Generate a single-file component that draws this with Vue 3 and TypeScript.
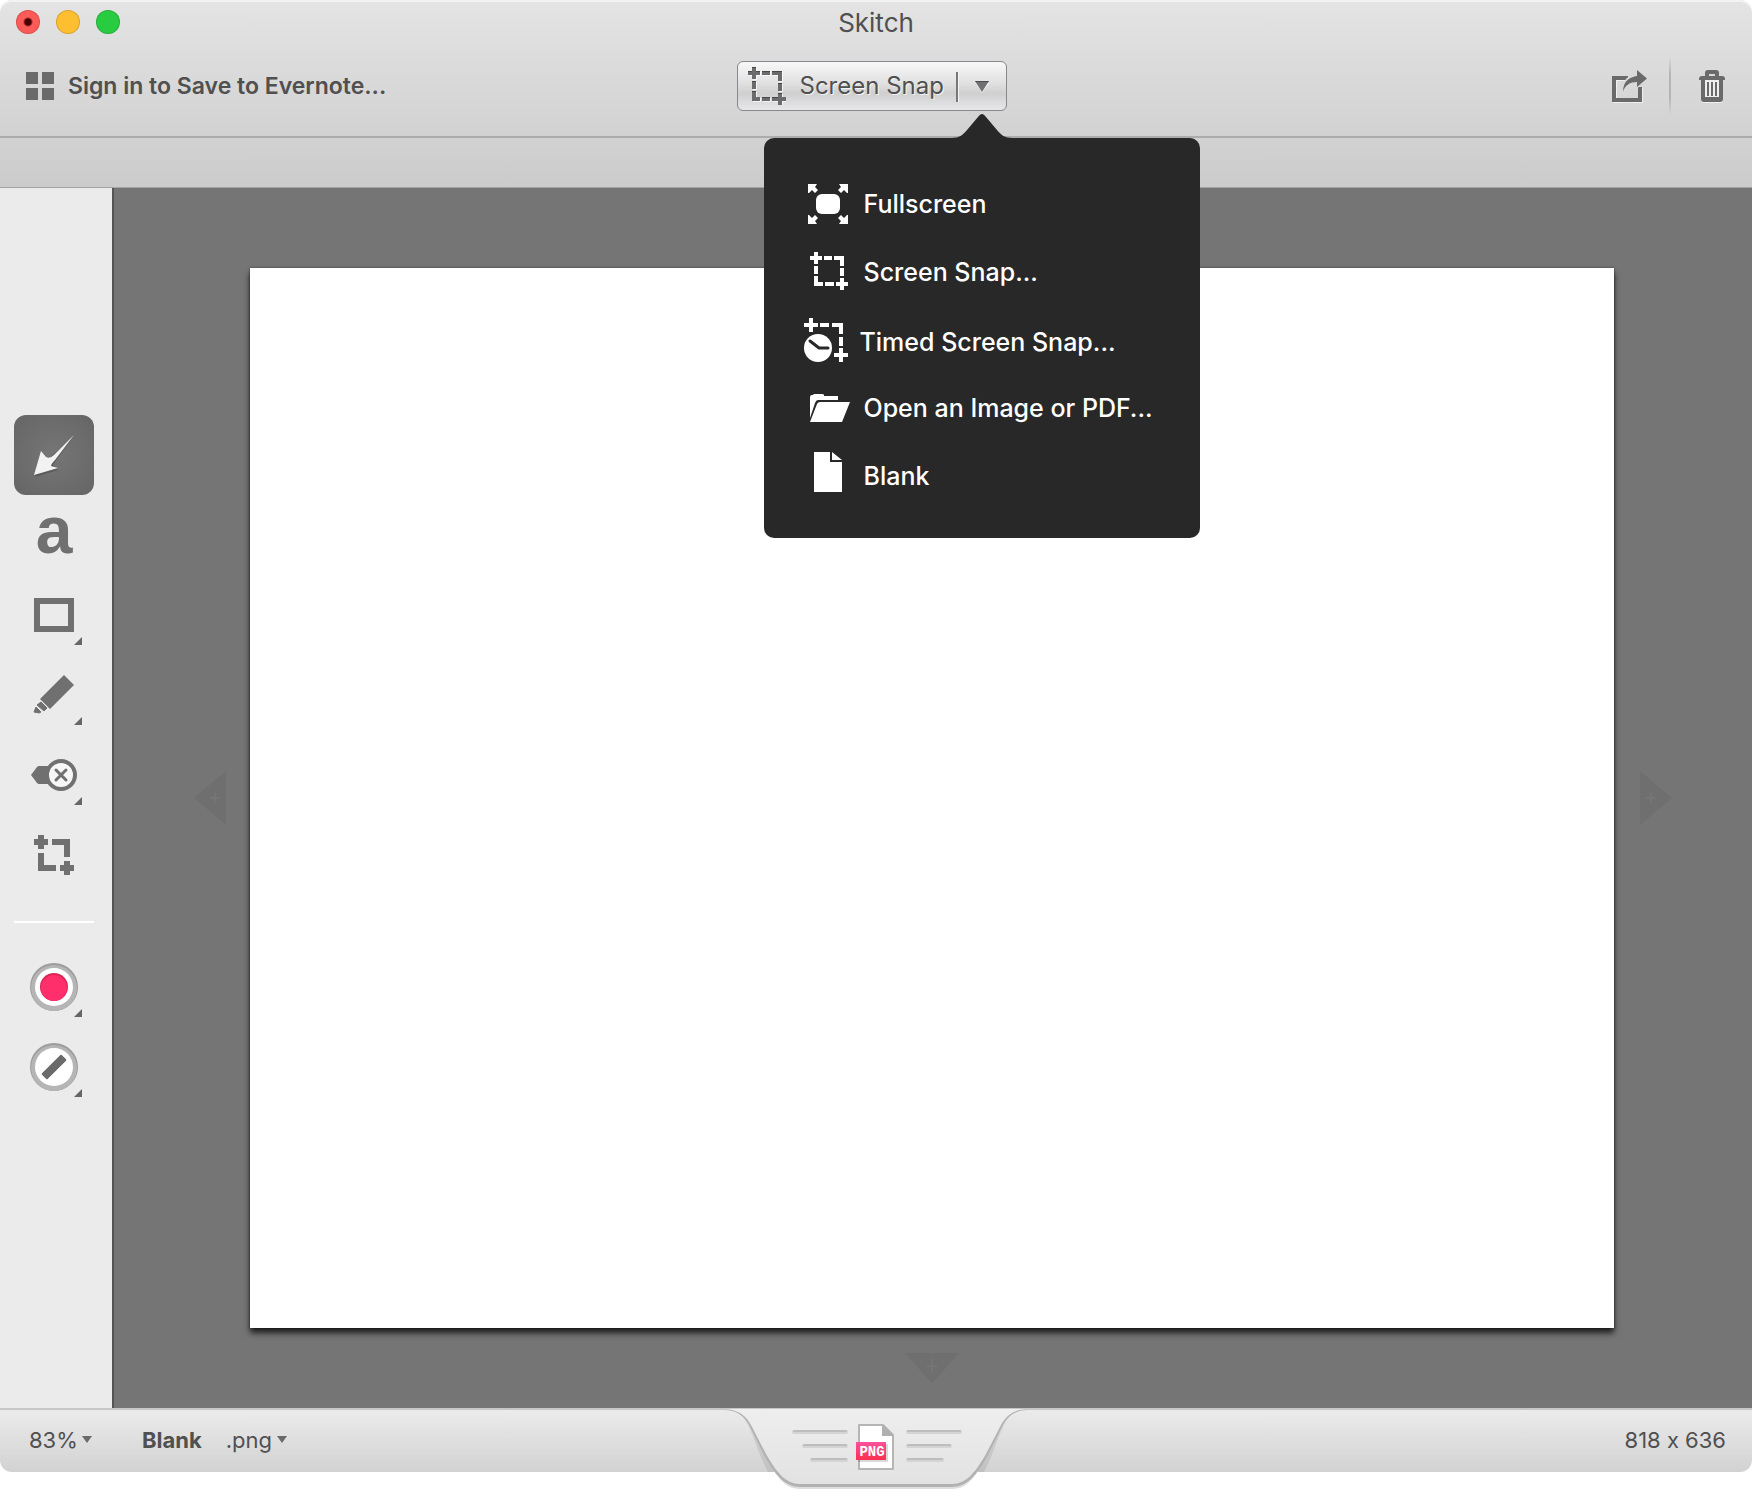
<script setup lang="ts">
import { ref } from 'vue'

type Tool = 'arrow' | 'text' | 'shape' | 'marker' | 'pixelate' | 'crop'

interface ToolEntry {
  id: Tool
  label: string
  more: boolean
}

const tools: ToolEntry[] = [
  { id: 'arrow', label: 'Arrow', more: false },
  { id: 'text', label: 'Text', more: false },
  { id: 'shape', label: 'Rectangle', more: true },
  { id: 'marker', label: 'Marker', more: true },
  { id: 'pixelate', label: 'Pixelate', more: true },
  { id: 'crop', label: 'Crop', more: false },
]

const activeTool = ref<Tool>('arrow')
const menuOpen = ref(true)
</script>

<template>
  <div class="window">
    <header class="chrome">
      <div class="titlebar">
        <div class="lights">
          <button class="light close" aria-label="Close"></button>
          <button class="light minimise" aria-label="Minimise"></button>
          <button class="light zoom" aria-label="Zoom"></button>
        </div>
        <h1 class="title">Skitch</h1>
      </div>
      <div class="toolbar">
        <button class="account">
          <svg width="28" height="28" viewBox="0 0 28 28" fill="#6a6a6a" aria-hidden="true">
            <path d="M0 0h12v12H0zM16 0h12v12H16zM0 16h12v12H0zM16 16h12v12H16z" />
          </svg>
          <span>Sign in to Save to Evernote...</span>
        </button>

        <div class="capture">
          <button class="snap">
            <svg width="38" height="38" viewBox="0 0 38 38" aria-hidden="true">
              <g fill="#fff" transform="translate(1 1)" opacity=".7">
                <path d="M4 0h4v4h4v4H8v4H4V8H0V4h4zM14 4h8v4h-8zM24 4h10v10h-4V8h-6zM30 16h4v8h-4zM4 14h4v8H4zM4 24h4v6h4v4H4zM14 30h8v4h-8zM30 26h4v4h4v4h-4v4h-4v-4h-6v-4h6z" />
              </g>
              <path fill="#6b6b6e" d="M4 0h4v4h4v4H8v4H4V8H0V4h4zM14 4h8v4h-8zM24 4h10v10h-4V8h-6zM30 16h4v8h-4zM4 14h4v8H4zM4 24h4v6h4v4H4zM14 30h8v4h-8zM30 26h4v4h4v4h-4v4h-4v-4h-6v-4h6z" />
              <path fill="#47474a" d="M4 0h4v1H4zM0 4h4v1H0zM8 4h4v1H8zM14 4h8v1h-8zM24 4h10v1H24zM14 30h8v1h-8zM30 26h4v1h-4zM24 30h6v1h-6zM30 16h4v1h-4zM4 14h4v1H4zM4 24h4v1H4z" />
            </svg>
            <span>Screen Snap</span>
          </button>
          <button class="more" aria-label="Capture options" :aria-expanded="menuOpen" @click="menuOpen = !menuOpen">
            <svg width="14" height="12" viewBox="0 0 14 12" aria-hidden="true">
              <path fill="#f5f5f5" d="M1 2h13L7 12z" />
              <path fill="#6f6f74" d="M0 0h14L7 11z" />
              <path fill="#4a4a4d" d="M0 0h14l-1 1H1z" />
            </svg>
          </button>

          <nav v-if="menuOpen" class="menu" aria-label="Capture">
            <svg class="pointer" width="60" height="25" viewBox="0 0 60 25" aria-hidden="true">
              <path fill="#282828" d="M0 25V24C7 24 11 21 15 16L26 3C29-1 31-1 34 3L45 16C49 21 53 24 60 24V25Z" />
            </svg>
            <button class="item">
              <svg width="44" height="44" viewBox="0 0 44 44" fill="#fff" aria-hidden="true">
                <rect x="12" y="12" width="24" height="20" rx="6" />
                <path d="M4 2h9l-2 3 3 3-3 3-3-3-3 3H4zM44 2h-9l2 3-3 3 3 3 3-3 3 3h1zM4 42h9l-2-3 3-3-3-3-3 3-3-3H4zM44 42h-9l2-3-3-3 3-3 3 3 3-3h1z" />
              </svg>
              <span>Fullscreen</span>
            </button>
            <button class="item">
              <svg width="44" height="44" viewBox="0 0 44 44" fill="#fff" aria-hidden="true">
                <path d="M10 2h4v4h4v4h-4v4h-4v-4H6V6h4zM20 6h8v4h-8zM30 6h10v10h-4v-6h-6zM36 18h4v8h-4zM10 16h4v8h-4zM10 26h4v6h5v4h-9zM21 32h9v4h-9zM36 28h4v4h4v4h-4v4h-4v-4h-4v-4h4z" />
              </svg>
              <span>Screen Snap...</span>
            </button>
            <button class="item timed">
              <svg width="44" height="44" viewBox="0 0 44 44" fill="#fff" aria-hidden="true">
                <path d="M5 0h4v5h5v4H9v5H5V9H0V5h5zM16 5h9v4h-9zM28 5h11v11h-4V9h-7zM35 19h4v9h-4zM35 30h4v5h5v4h-5v5h-4v-5h-5v-4h5z" />
                <circle cx="14" cy="30" r="14" />
                <path d="M6 23l9 7h9" fill="none" stroke="#282828" stroke-width="3" stroke-linecap="round" />
              </svg>
              <span>Timed Screen Snap...</span>
            </button>
            <button class="item">
              <svg class="folder" width="44" height="44" viewBox="0 0 44 44" fill="#fff" aria-hidden="true">
                <path d="M6 32V11q0-2 2-2h1q0-1 2-1h7q2 0 2 1v1h14v4H14q-2 0-3 3z" />
                <path d="M13 18q1-2 3-2h30l-8 20H6z" />
              </svg>
              <span>Open an Image or PDF...</span>
            </button>
            <button class="item">
              <svg width="44" height="48" viewBox="0 0 44 48" fill="#fff" aria-hidden="true">
                <path d="M10 0h16v10h12v30H10zM28 0l10 8H28z" />
              </svg>
              <span>Blank</span>
            </button>
          </nav>
        </div>

        <div class="actions">
          <button aria-label="Share">
            <svg width="36" height="34" viewBox="0 0 36 34" aria-hidden="true">
              <path fill="none" stroke="#efefef" stroke-width="4" d="M14 10H4v22h26V19" />
              <path fill="none" stroke="#6a6a6a" stroke-width="4" d="M17 9H3v22h26V18" />
              <path fill="#dadada" d="M11 25C11 9 19 6 24 5V1l12 8-12 13v-6c-6 0-9 3-11 9z" />
              <path fill="#6a6a6a" d="M12 23C12 12 19 8 26 7V1l10 8.500-10 8.500v-5c-7 0-12 3-14 10z" />
            </svg>
          </button>
          <i class="rule"></i>
          <button aria-label="Delete">
            <svg width="26" height="34" viewBox="0 0 26 34" aria-hidden="true">
              <path fill="#efefef" d="M2 10h22v21q0 3-3 3H5q-3 0-3-3z" />
              <path fill="#6a6a6a" fill-rule="evenodd" d="M2 10h22v20q0 3-3 3H5q-3 0-3-3zM6 11v17h14V11z" />
              <path fill="#6a6a6a" fill-rule="evenodd" d="M0 10q0-3 3-3h3V4q0-3 3-3h8q3 0 3 3v3h3q3 0 3 3v1H0zM10 7h6V5h-6z" />
              <path stroke="#6a6a6a" stroke-width="2" d="M9 13v14M13 13v14M17 13v14" />
            </svg>
          </button>
        </div>
      </div>
      <div class="strip"></div>
    </header>

    <main class="body">
      <aside class="tools">
        <button
          v-for="tool in tools"
          :key="tool.id"
          class="tool"
          :class="{ active: tool.id === activeTool, letter: tool.id === 'text' }"
          :aria-label="tool.label"
          @click="activeTool = tool.id"
        >
          <span v-if="tool.id === 'text'">a</span>
          <svg v-else width="80" height="80" viewBox="0 0 80 80" fill="#707070" aria-hidden="true">
            <g v-if="tool.id === 'arrow'">
              <path fill="#4c4c4c" opacity=".6" d="M21 62l7-23 5 6 26-23-20 28 5 5z" />
              <path fill="#f2f2f2" d="M20 60l7-24 5 6q4 2 8-2l20-20-19 25q-4 4-4 6l7 2z" />
            </g>
            <path v-if="tool.id === 'shape'" fill-rule="evenodd" d="M20 23h40v34H20zM26 29v22h28V29z" />
            <g v-if="tool.id === 'marker'">
              <path d="M50 20l10 10-24 24-10-10z" />
              <path d="M27 47l6 6-3 3-7-6zM22 52l5 5-2 1-5-1z" stroke="#707070" stroke-width="1" />
            </g>
            <g v-if="tool.id === 'pixelate'">
              <path d="M17 40l6-8q1-1 2-1h15v18H25q-1 0-2-1z" />
              <circle cx="47" cy="40" r="14" fill="#f6f6f6" stroke="#707070" stroke-width="4" />
              <path d="M42 35l10 10M52 35L42 45" stroke="#707070" stroke-width="3" stroke-linecap="round" />
            </g>
            <path v-if="tool.id === 'crop'" d="M24 20h6v4h4v6h-4v4h-6v-4h-4v-6h4zM38 24h18v18h-6V30H38zM24 38h6v12h12v6H24zM50 46h6v4h4v6h-4v4h-6v-4h-4v-6h4z" />
            <path v-if="tool.more" fill="#666" d="M60 70l8-8v8z" />
          </svg>
        </button>
        <hr class="divider" />
        <button class="tool" aria-label="Colour">
          <svg width="80" height="80" viewBox="0 0 80 80" aria-hidden="true">
            <circle cx="40" cy="40" r="24" fill="#9c9c9c" />
            <circle cx="40" cy="41" r="23" fill="#b5b5b5" />
            <circle cx="40" cy="40" r="19" fill="#fff" />
            <circle cx="40" cy="40" r="14" fill="#d92558" />
            <circle cx="40" cy="41" r="13" fill="#ff2f6c" />
            <path fill="#666" d="M60 70l8-8v8z" />
          </svg>
        </button>
        <button class="tool" aria-label="Line width">
          <svg width="80" height="80" viewBox="0 0 80 80" aria-hidden="true">
            <circle cx="40" cy="40" r="24" fill="#9c9c9c" />
            <circle cx="40" cy="41" r="23" fill="#b5b5b5" />
            <circle cx="40" cy="40" r="19" fill="#fff" />
            <rect x="26" y="36" width="28" height="8" rx="1" fill="#6a6a6a" transform="rotate(-45 40 40)" />
            <path fill="#666" d="M60 70l8-8v8z" />
          </svg>
        </button>
      </aside>

      <section class="workspace">
        <button class="grow left" aria-label="Extend left">
          <svg width="32" height="54" viewBox="0 0 32 54" aria-hidden="true">
            <path fill="#6f6f6f" d="M32 0v54L0 27z" />
            <path fill="#757575" d="M20 22h2v4h4v2h-4v4h-2v-4h-4v-2h4z" />
          </svg>
        </button>
        <div class="paper"></div>
        <button class="grow right" aria-label="Extend right">
          <svg width="32" height="54" viewBox="0 0 32 54" aria-hidden="true">
            <path fill="#6f6f6f" d="M0 0v54l32-27z" />
            <path fill="#757575" d="M10 22h2v4h4v2h-4v4h-2v-4H6v-2h4z" />
          </svg>
        </button>
        <button class="grow below" aria-label="Extend down">
          <svg width="54" height="30" viewBox="0 0 54 30" aria-hidden="true">
            <path fill="#6f6f6f" d="M0 0h54L27 30z" />
            <path fill="#757575" d="M26 6h2v6h4v2h-4v6h-2v-6h-4v-2h4z" />
          </svg>
        </button>
      </section>
    </main>

    <footer class="status">
      <div class="picker">
        <select aria-label="Zoom">
          <option>83%</option>
        </select>
        <svg width="10" height="8" viewBox="0 0 10 8" aria-hidden="true"><path fill="#6a6a6a" d="M0 0h10L5 7z" /></svg>
      </div>
      <strong class="name">Blank</strong>
      <div class="picker">
        <select aria-label="File format">
          <option>.png</option>
        </select>
        <svg width="10" height="8" viewBox="0 0 10 8" aria-hidden="true"><path fill="#6a6a6a" d="M0 0h10L5 7z" /></svg>
      </div>
      <span class="size">818 x 636</span>

      <svg class="drag" width="354" height="84" viewBox="0 0 354 84" role="img" aria-label="Drag the PNG file">
        <defs>
          <linearGradient id="tab" x1="0" y1="0" x2="0" y2="1">
            <stop offset="0" stop-color="#eeeeee" />
            <stop offset="1" stop-color="#e2e2e2" />
          </linearGradient>
          <linearGradient id="badge" x1="0" y1="0" x2="0" y2="1">
            <stop offset="0" stop-color="#fb519c" />
            <stop offset="1" stop-color="#fb2f50" />
          </linearGradient>
        </defs>
        <path fill="#000" opacity=".08" d="M25 2C36 2 43 5 49 17C57 34 62 52 69 64H76L278 64H285C292 52 297 34 305 17C311 5 318 2 329 2Z" />
        <path fill="#dedede" d="M72 58C80 72 88 81 101 81H253C266 81 274 72 282 58Z" />
        <path fill="#b2b2b2" d="M25 2C38 2 45 8 50 17L65 47C76 67 86 79 101 79H253C268 79 278 67 289 47L304 17C309 8 316 2 329 2Z" />
        <path fill="url(#tab)" d="M27 1C40 2 47 8 52 17L67 46C78 65 87 76 101 76H253C267 76 276 65 287 46L302 17C307 8 314 2 327 1Z" />
        <g stroke-width="4" stroke-linecap="round" stroke="#d4d4d4">
          <path d="M95 24h52M105 38h42M113 52h34M209 24h52M209 38h42M209 52h34" />
        </g>
        <g stroke-width="2" stroke-linecap="round" stroke="#bdbdbd">
          <path d="M95 23h52M105 37h42M113 51h34M209 23h52M209 37h42M209 51h34" />
        </g>
        <path fill="#fff" stroke="#b5b5b5" stroke-width="2" stroke-linejoin="round" d="M160 17h24l10 10v34h-34z" />
        <path fill="#b0b0b0" d="M183 16l12 12h-12z" />
        <path fill="#000" opacity=".15" d="M159 36h30v18h-30z" />
        <path fill="url(#badge)" d="M157 34h30v18h-30z" />
        <text x="173" y="48" text-anchor="middle" class="badge">PNG</text>
      </svg>
    </footer>
  </div>
</template>

<style>
body {
  margin: 0;
  background: #fff;
}
</style>

<style scoped>
.window {
  box-sizing: border-box;
  display: flex;
  flex-direction: column;
  min-height: 100vh;
  padding-bottom: 26px;
  font-family: Inter, "Liberation Sans", sans-serif;
  font-size: 22px;
  font-feature-settings: "calt" 0;
  line-height: 28px;
  color: #505050;
}

button,
select {
  margin: 0;
  padding: 0;
  border: 0;
  background: none;
  color: inherit;
  font: inherit;
  font-feature-settings: inherit;
}

svg {
  display: block;
  flex: none;
}

.chrome {
  border-radius: 12px 12px 0 0;
  border-bottom: 1px solid #a4a4a4;
  background: linear-gradient(#e4e4e4, #cbcbcb);
  box-shadow: inset 0 2px 0 #f2f2f2;
}

.titlebar {
  display: grid;
  grid-template-columns: 1fr auto 1fr;
  align-items: center;
  height: 44px;
  padding: 0 16px;
}

.lights {
  display: flex;
  gap: 16px;
}

.light {
  width: 24px;
  height: 24px;
  border-radius: 50%;
  box-shadow: inset 0 0 0 1px rgba(0, 0, 0, 0.14);
}

.close {
  background: radial-gradient(circle, #4a0002 0 3px, #fc5b57 5px);
}

.minimise {
  background: #fdbe30;
}

.zoom {
  background: #29cb41;
}

.title {
  margin: 0;
  padding-top: 2px;
  font-size: 26px;
  font-weight: 400;
}

.toolbar {
  display: grid;
  grid-template-columns: 1fr auto 1fr;
  align-items: center;
  height: 84px;
  padding: 0 27px 8px 26px;
  border-bottom: 2px solid #acacac;
}

.account {
  display: flex;
  align-items: center;
  justify-self: start;
  gap: 14px;
  font-size: 23px;
  font-weight: 600;
  color: #505050;
  white-space: nowrap;
}

.capture {
  position: relative;
  display: flex;
  box-sizing: border-box;
  width: 270px;
  height: 50px;
  margin-right: 8px;
  border: 1px solid #87878d;
  border-radius: 6px;
  background: linear-gradient(#f8f8f8, #e0e0e0 45%, #cfcfd0 65%, #e8e6e8);
}

.snap {
  display: flex;
  flex: 1;
  align-items: center;
  gap: 14px;
  padding-left: 10px;
  font-size: 24px;
  text-shadow: 1px 1px 0 #f4f4f4;
  white-space: nowrap;
}

.more {
  display: flex;
  align-items: center;
  justify-content: center;
  box-sizing: border-box;
  width: 50px;
  height: 30px;
  margin: 10px 0;
  border-left: 2px solid #77777a;
  box-shadow: inset 1px 0 0 #f4f4f4;
}

.menu {
  position: absolute;
  z-index: 2;
  top: 76px;
  left: 26px;
  box-sizing: border-box;
  width: 436px;
  padding: 32px 40px 28px;
  border-radius: 10px;
  background: #282828;
}

.pointer {
  position: absolute;
  top: -24px;
  left: 188px;
}

.item {
  display: flex;
  align-items: center;
  gap: 16px;
  width: 100%;
  height: 68px;
  font-size: 25px;
  font-weight: 500;
  color: #fff;
  white-space: nowrap;
}

.item.timed {
  gap: 12px;
}

.item.timed span {
  padding-top: 4px;
}

.folder {
  overflow: visible;
}

.actions {
  display: flex;
  align-items: center;
  justify-self: end;
  gap: 22px;
}

.rule {
  width: 2px;
  height: 58px;
  margin-right: 6px;
  background: linear-gradient(transparent, #b4b4b4 30%, #b4b4b4 70%, transparent);
}

.strip {
  height: 49px;
}

.body {
  display: flex;
  flex: 1;
}

.tools {
  display: flex;
  flex-direction: column;
  align-items: flex-start;
  box-sizing: border-box;
  width: 114px;
  padding: 227px 0 0 14px;
  border-right: 2px solid #555;
  background: #ebebeb;
}

.tool {
  width: 80px;
  height: 80px;
  border-radius: 12px;
}

.tool.active {
  background: radial-gradient(#767676, #656565);
}

.tool.letter {
  padding-bottom: 10px;
  font-family: "Liberation Sans", Arial, sans-serif;
  font-size: 66px;
  font-weight: 700;
  line-height: 66px;
  color: #707070;
}

.divider {
  width: 80px;
  height: 2px;
  margin: 26px 0 24px;
  border: 0;
  background: #fff;
}

.workspace {
  display: grid;
  flex: 1;
  grid-template: 80px 1fr 80px / 136px 1fr 138px;
  background: #757575;
}

.paper {
  grid-area: 2 / 2;
  background: #fff;
  box-shadow: 0 5px 6px rgba(0, 0, 0, 0.75), 0 0 2px rgba(0, 0, 0, 0.5);
}

.grow.left {
  grid-area: 2 / 1;
  place-self: center end;
  margin-right: 24px;
}

.grow.right {
  grid-area: 2 / 3;
  place-self: center start;
  margin-left: 26px;
}

.grow.below {
  grid-area: 3 / 2;
  place-self: start center;
  margin-top: 25px;
}

.status {
  position: relative;
  display: flex;
  align-items: center;
  box-sizing: border-box;
  height: 64px;
  padding: 0 26px 2px 29px;
  border-top: 2px solid #c6c6c6;
  border-radius: 0 0 12px 12px;
  background: linear-gradient(#ebebeb, #d2d2d2);
}

.picker {
  display: flex;
  align-items: center;
  gap: 4px;
}

.picker select {
  appearance: none;
}

.name {
  margin: 0 24px 0 50px;
}

.size {
  margin-left: auto;
}

.drag {
  position: absolute;
  top: -2px;
  left: 50%;
  transform: translateX(-50%);
}

.badge {
  fill: #fff;
  font: 700 14px "Liberation Mono", monospace;
}
</style>
